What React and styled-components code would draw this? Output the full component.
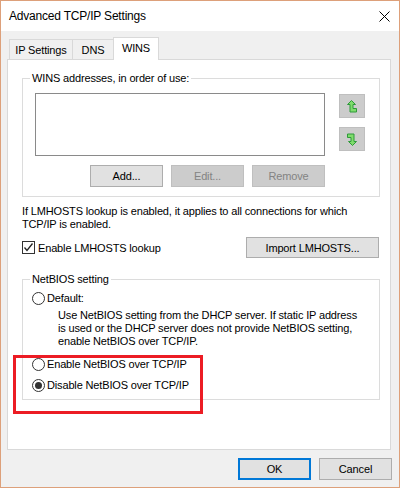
import React from 'react';
import styled, { createGlobalStyle } from 'styled-components';

const GlobalStyle = createGlobalStyle`
  body {
    margin: 0;
    font-family: 'Liberation Sans', Arial, sans-serif;
    font-size: 11px;
    color: #000;
  }
  * {
    box-sizing: border-box;
  }
`;

const Window = styled.div`
  position: relative;
  width: 400px;
  height: 488px;
  border: 1px solid #dda07a;
  background: #f0f0f0;
  display: flex;
  flex-direction: column;
  letter-spacing: -0.15px;
`;

const TitleBar = styled.div`
  height: 30px;
  flex: none;
  background: #fff;
  display: flex;
  align-items: center;
  justify-content: space-between;
  padding: 0 9px 0 8px;
  font-size: 12px;
  letter-spacing: -0.2px;
`;

const Body = styled.div`
  flex: 1;
  display: flex;
  flex-direction: column;
  padding: 6px 8px 0 6px;
`;

const TabRow = styled.div`
  display: flex;
  align-items: flex-end;
  height: 23px;
  margin: 0 0 -1px 2px;
  position: relative;
  z-index: 1;
`;

const Tab = styled.div`
  width: ${(p) => p.$w}px;
  height: ${(p) => (p.$active ? '23px' : '20px')};
  margin-bottom: ${(p) => (p.$active ? '0' : '1px')};
  padding-bottom: ${(p) => (p.$active ? '2px' : '0')};
  margin-left: -1px;
  border: 1px solid #d9d9d9;
  border-bottom: none;
  background: ${(p) => (p.$active ? '#fff' : '#f0f0f0')};
  display: flex;
  align-items: center;
  justify-content: center;
  position: relative;
  z-index: ${(p) => (p.$active ? 2 : 1)};
  &:first-child {
    margin-left: 0;
  }
`;

const Panel = styled.div`
  height: 391px;
  background: #fff;
  border: 1px solid #d9d9d9;
  padding: 11px 10px 0 14px;
  display: flex;
  flex-direction: column;
`;

const GroupBox = styled.fieldset`
  margin: ${(p) => p.$mt || 0}px 0 0;
  padding: 0;
  border: 1px solid #dcdcdc;
  min-width: 0;
`;

const Legend = styled.legend`
  margin-left: 7px;
  padding: 0 2px;
  line-height: 14px;
`;

const GroupContent = styled.div`
  padding: ${(p) => p.$pad};
`;

const ListRow = styled.div`
  display: flex;
  gap: 14px;
`;

const ListBox = styled.div`
  width: 290px;
  height: 63px;
  border: 1px solid #8a8a8a;
  background: #fff;
`;

const ArrowColumn = styled.div`
  display: flex;
  flex-direction: column;
  gap: 9px;
  padding-top: 1px;
`;

const ArrowButton = styled.div`
  width: 26px;
  height: 24px;
  background: #cccccc;
  border: 1px solid #bfbfbf;
  display: flex;
  align-items: center;
  justify-content: center;
`;

const ButtonRow = styled.div`
  width: 290px;
  display: flex;
  justify-content: flex-end;
  gap: 8px;
  margin-top: 9px;
`;

const Button = styled.div`
  width: ${(p) => p.$w || 73}px;
  height: ${(p) => p.$h || 22}px;
  display: flex;
  align-items: center;
  justify-content: center;
  background: ${(p) => (p.$disabled ? '#cccccc' : '#e1e1e1')};
  color: ${(p) => (p.$disabled ? '#838383' : '#000')};
  border: ${(p) =>
    p.$default ? '2px solid #0078d7' : p.$disabled ? '1px solid #bfbfbf' : '1px solid #adadad'};
`;

const InfoText = styled.p`
  margin: 7px 0 0;
  line-height: 13px;
  padding-top: 1px;
`;

const CheckRow = styled.div`
  display: flex;
  align-items: center;
  justify-content: space-between;
  margin: 6px 1px 0 0;
`;

const CheckLabel = styled.label`
  display: flex;
  align-items: center;
  gap: 3px;
`;

const CheckBox = styled.span`
  width: 13px;
  height: 13px;
  border: 1px solid #333;
  background: #fff;
  display: flex;
  align-items: center;
  justify-content: center;
`;

const RadioRow = styled.label`
  display: flex;
  align-items: center;
  gap: 2px;
  line-height: 14px;
  margin-top: ${(p) => p.$mt || 0}px;
`;

const Radio = styled.span`
  width: 13px;
  height: 13px;
  border-radius: 50%;
  border: 1px solid #333;
  background: #fff;
  display: flex;
  align-items: center;
  justify-content: center;
  &::after {
    content: '';
    width: 7px;
    height: 7px;
    border-radius: 50%;
    background: #333;
    display: ${(p) => (p.$checked ? 'block' : 'none')};
  }
`;

const Description = styled.p`
  margin: 4px 0 0 26px;
  line-height: 13px;
`;

const Footer = styled.div`
  display: flex;
  justify-content: flex-end;
  gap: 8px;
  margin: 8px -1px 0 0;
`;

const Highlight = styled.div`
  position: absolute;
  left: 12px;
  top: 354px;
  width: 190px;
  height: 59px;
  border: 3px solid #ec1c24;
  pointer-events: none;
`;

const CloseIcon = () => (
  <svg width="11" height="11" viewBox="0 0 11 11">
    <path d="M0.5 0.5 L10.5 10.5 M10.5 0.5 L0.5 10.5" stroke="#000" strokeWidth="1" />
  </svg>
);

const MoveArrow = ({ down }) => (
  <svg width="10" height="13" viewBox="0 0 10 13">
    <polygon
      points="4.5,0.5 8.5,4.5 6,4.5 6,8.5 9.5,8.5 9.5,12 3,12 3,4.5 0.5,4.5"
      fill="#7fdc6c"
      stroke="#2f9a3a"
      strokeWidth="1"
      transform={down ? 'rotate(180 5 6.5)' : undefined}
    />
  </svg>
);

const CheckMark = () => (
  <svg width="11" height="11" viewBox="0 0 11 11">
    <path d="M1.5 5.5 L4 8.5 L9.5 1.5" fill="none" stroke="#222" strokeWidth="1.3" />
  </svg>
);

export default function App() {
  return (
    <>
      <GlobalStyle />
      <Window>
        <TitleBar>
          <span>Advanced TCP/IP Settings</span>
          <CloseIcon />
        </TitleBar>
        <Body>
          <TabRow>
            <Tab $w={64}>IP Settings</Tab>
            <Tab $w={42}>DNS</Tab>
            <Tab $w={46} $active>
              WINS
            </Tab>
          </TabRow>
          <Panel>
            <GroupBox>
              <Legend>WINS addresses, in order of use:</Legend>
              <GroupContent $pad="8px 0 9px 12px">
                <ListRow>
                  <ListBox />
                  <ArrowColumn>
                    <ArrowButton>
                      <MoveArrow />
                    </ArrowButton>
                    <ArrowButton>
                      <MoveArrow down />
                    </ArrowButton>
                  </ArrowColumn>
                </ListRow>
                <ButtonRow>
                  <Button>Add...</Button>
                  <Button $disabled>Edit...</Button>
                  <Button $disabled>Remove</Button>
                </ButtonRow>
              </GroupContent>
            </GroupBox>

            <InfoText>
              If LMHOSTS lookup is enabled, it applies to all connections for which
              <br />
              TCP/IP is enabled.
            </InfoText>

            <CheckRow>
              <CheckLabel>
                <CheckBox>
                  <CheckMark />
                </CheckBox>
                Enable LMHOSTS lookup
              </CheckLabel>
              <Button $w={133} $h={21}>
                Import LMHOSTS...
              </Button>
            </CheckRow>

            <GroupBox $mt={14}>
              <Legend>NetBIOS setting</Legend>
              <GroupContent $pad="5px 0 7px 9px">
                <RadioRow>
                  <Radio />
                  Default:
                </RadioRow>
                <Description>
                  Use NetBIOS setting from the DHCP server. If static IP address
                  <br />
                  is used or the DHCP server does not provide NetBIOS setting,
                  <br />
                  enable NetBIOS over TCP/IP.
                </Description>
                <RadioRow $mt={9}>
                  <Radio />
                  Enable NetBIOS over TCP/IP
                </RadioRow>
                <RadioRow $mt={7}>
                  <Radio $checked />
                  Disable NetBIOS over TCP/IP
                </RadioRow>
              </GroupContent>
            </GroupBox>
          </Panel>
          <Footer>
            <Button $default>OK</Button>
            <Button>Cancel</Button>
          </Footer>
        </Body>
        <Highlight />
      </Window>
    </>
  );
}
